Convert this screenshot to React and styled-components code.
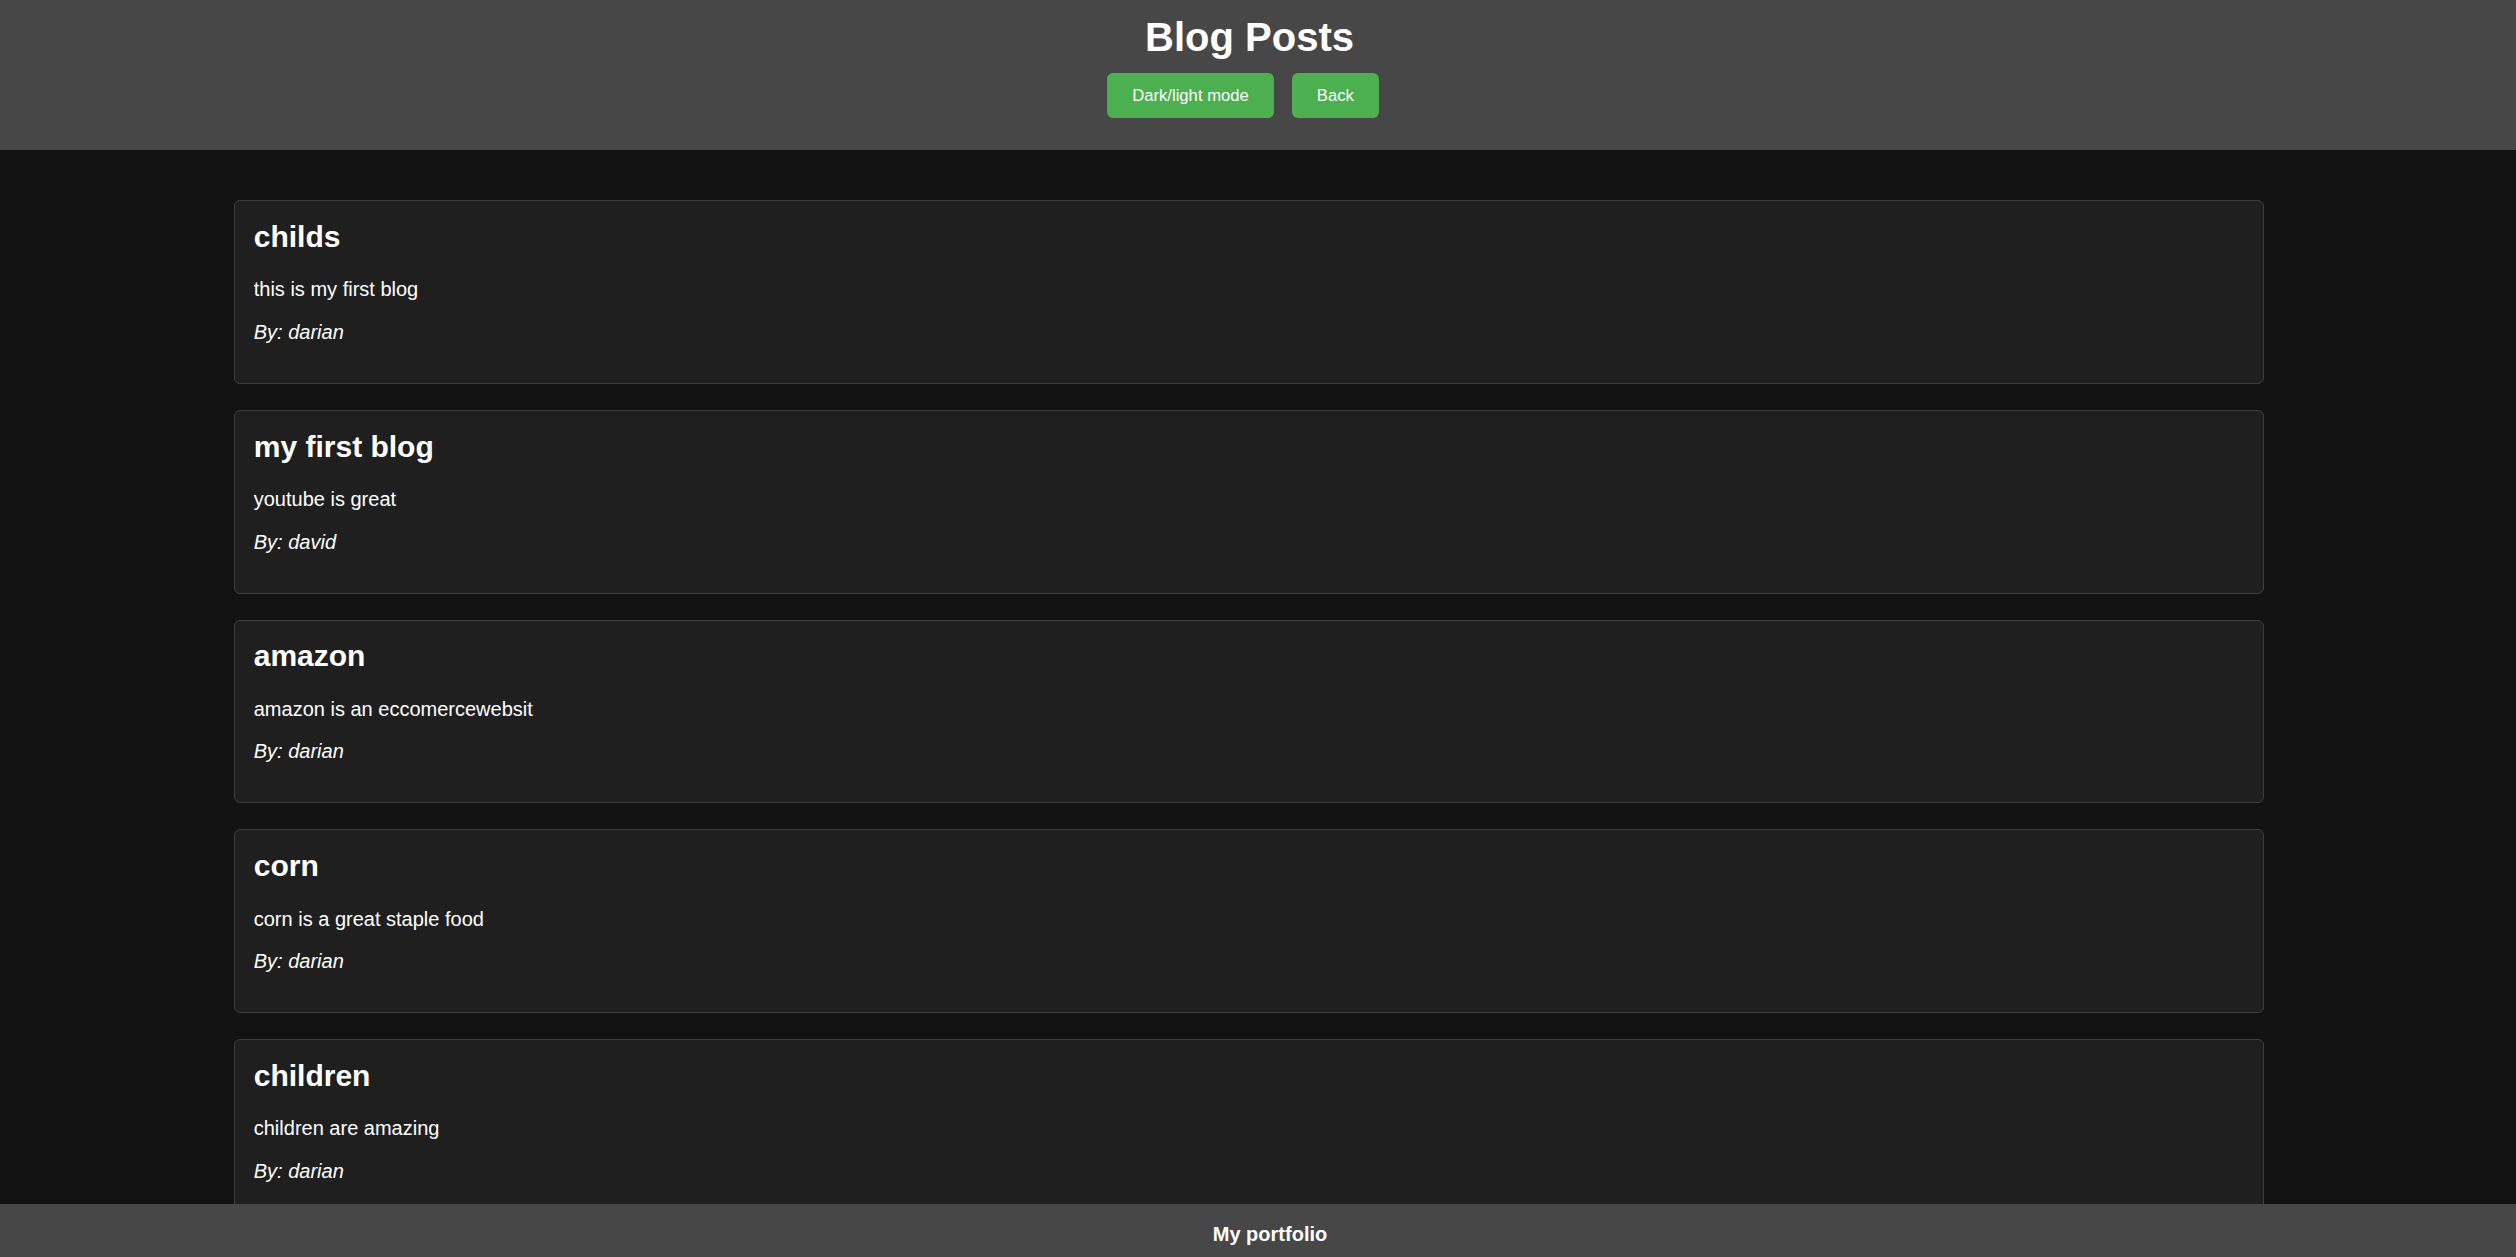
import React from 'react';
import styled, { createGlobalStyle } from 'styled-components';

const GlobalStyle = createGlobalStyle`
  html, body {
    margin: 0;
    padding: 0;
    background: #121212;
    font-family: "Liberation Sans", Arial, sans-serif;
    color: #fff;
    overflow: hidden;
  }
`;

const Page = styled.div`
  height: 100vh;
  display: flex;
  flex-direction: column;
  overflow: hidden;
`;

const Header = styled.header`
  background: #474747;
  height: 150px;
  box-sizing: border-box;
  padding: 14px 17px 0 0;
  text-align: center;
  flex-shrink: 0;
`;

const Title = styled.h1`
  margin: 0;
  font-size: 40px;
  line-height: 46px;
  font-weight: bold;
`;

const ButtonRow = styled.div`
  display: flex;
  justify-content: center;
  gap: 5px;
  margin-top: 13px;
`;

const Button = styled.button`
  background: #4caf50;
  color: #fff;
  border: none;
  border-radius: 6px;
  padding: 0 25px;
  height: 45px;
  margin-right: 13px;
  font-family: "Liberation Sans", Arial, sans-serif;
  font-size: 16.67px;
  cursor: pointer;
`;

const Main = styled.main`
  flex: 1;
  overflow: hidden;
  padding: 50px 252px 0 234px;
  display: flex;
  flex-direction: column;
  gap: 26px;
`;

const Card = styled.article`
  background: #1f1f1f;
  border: 1px solid #3d3d3d;
  border-radius: 6px;
  padding: 18.75px 18.75px 19.5px;
  flex-shrink: 0;
`;

const PostTitle = styled.h2`
  margin: 0 0 24px;
  font-size: 30px;
  line-height: 34.5px;
  font-weight: bold;
`;

const Body = styled.p`
  margin: 0 0 19.5px;
  font-size: 20px;
  line-height: 23px;
`;

const Author = styled(Body)`
  font-style: italic;
`;

const Footer = styled.footer`
  background: #474747;
  height: 53px;
  box-sizing: border-box;
  padding: 18.5px 0 0 24px;
  text-align: center;
  font-size: 20px;
  line-height: 23px;
  font-weight: bold;
  flex-shrink: 0;
`;

const posts = [
  { title: 'childs', body: 'this is my first blog', author: 'darian' },
  { title: 'my first blog', body: 'youtube is great', author: 'david' },
  { title: 'amazon', body: 'amazon is an eccomercewebsit', author: 'darian' },
  { title: 'corn', body: 'corn is a great staple food', author: 'darian' },
  { title: 'children', body: 'children are amazing', author: 'darian' },
];

export default function App() {
  return (
    <Page>
      <GlobalStyle />
      <Header>
        <Title>Blog Posts</Title>
        <ButtonRow>
          <Button>Dark/light mode</Button>
          <Button>Back</Button>
        </ButtonRow>
      </Header>
      <Main>
        {posts.map((post, i) => (
          <Card key={i}>
            <PostTitle>{post.title}</PostTitle>
            <Body>{post.body}</Body>
            <Author>By: {post.author}</Author>
          </Card>
        ))}
      </Main>
      <Footer>My portfolio</Footer>
    </Page>
  );
}
